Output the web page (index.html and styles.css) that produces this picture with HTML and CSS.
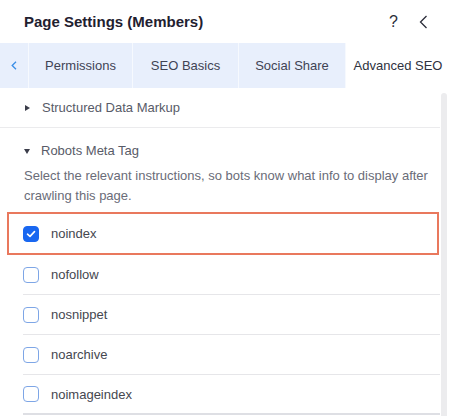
FILE: index.html
```html
<!DOCTYPE html>
<html>
<head>
<meta charset="utf-8">
<link rel="stylesheet" href="styles.css">
</head>
<body>
<div class="panel">
  <div class="header">
    <div class="title">Page Settings (Members)</div>
    <div class="actions">
      <span class="help">?</span>
      <svg class="back" width="9" height="14" viewBox="0 0 9 14"><path d="M7.5 1 L1.5 7 L7.5 13" fill="none" stroke="#2b2d3a" stroke-width="1.3"/></svg>
    </div>
  </div>
  <div class="tabs">
    <div class="tab arrow"><svg width="6" height="9" viewBox="0 0 6 9"><path d="M5 0.8 L1.2 4.5 L5 8.2" fill="none" stroke="#3a8ee6" stroke-width="1.3"/></svg></div>
    <div class="tab t1">Permissions</div>
    <div class="tab t2">SEO Basics</div>
    <div class="tab t3">Social Share</div>
    <div class="tab active">Advanced SEO</div>
  </div>
  <div class="body">
    <div class="main">
      <div class="section collapsed">
        <span class="tri tri-right"></span>
        <span class="sec-title">Structured Data Markup</span>
      </div>
      <div class="section-open">
        <div class="sec-head">
          <span class="tri tri-down"></span>
          <span class="sec-title">Robots Meta Tag</span>
        </div>
        <p class="desc">Select the relevant instructions, so bots know what info to display after crawling this page.</p>
        <div class="highlight">
          <div class="opt">
            <span class="cb checked"><svg width="10" height="8" viewBox="0 0 10 8"><path d="M1.5 4.2 L4 6.4 L8.5 1.6" fill="none" stroke="#fff" stroke-width="1.6" stroke-linecap="round" stroke-linejoin="round"/></svg></span>
            <span class="lbl">noindex</span>
          </div>
        </div>
        <div class="list">
          <div class="opt row"><span class="cb"></span><span class="lbl">nofollow</span></div>
          <div class="opt row"><span class="cb"></span><span class="lbl">nosnippet</span></div>
          <div class="opt row"><span class="cb"></span><span class="lbl">noarchive</span></div>
          <div class="opt row last"><span class="cb"></span><span class="lbl">noimageindex</span></div>
        </div>
      </div>
    </div>
    <div class="scroll"><div class="thumb"></div></div>
  </div>
</div>
</body>
</html>
```
FILE: styles.css
```css
* { box-sizing: border-box; }
html, body { margin: 0; padding: 0; background: #fff; }
body { font-family: "Liberation Sans", Arial, sans-serif; width: 450px; height: 416px; overflow: hidden; }
.panel { width: 450px; }
.header { height: 43px; display: flex; align-items: center; justify-content: space-between; padding: 0 22px 0 24px; }
.title { font-size: 15px; font-weight: bold; color: #1f2130; }
.actions { display: flex; align-items: center; gap: 21px; }
.help { font-size: 16px; color: #2b2d3a; }
.back { display: block; }
.tabs { height: 45px; display: flex; background: #e8effc; }
.tab { display: flex; align-items: center; justify-content: center; font-size: 13px; color: #3f4354; border-right: 1px solid #f6f9fe; }
.arrow { width: 29px; }
.t1 { width: 104px; }
.t2 { width: 106px; }
.t3 { width: 107px; }
.active { flex: 1; background: #fff; border-right: none; color: #2f3240; }
.body { display: flex; }
.main { width: 440px; }
.scroll { width: 10px; padding: 5px 3px 0 1px; }
.thumb { width: 6px; height: 340px; background: #ececee; border-radius: 3px 3px 0 0; }
.section { height: 40px; display: flex; align-items: center; padding-left: 24px; border-bottom: 1px solid #ebebed; }
.tri { display: inline-block; width: 0; height: 0; }
.tri-right { border-top: 3px solid transparent; border-bottom: 3px solid transparent; border-left: 5px solid #3b3d4a; margin-left: 1px; margin-right: 12px; }
.tri-down { border-left: 3.5px solid transparent; border-right: 3.5px solid transparent; border-top: 5px solid #3b3d4a; margin-right: 11px; }
.sec-title { font-size: 13px; color: #585b68; }
.sec-head { display: flex; align-items: center; padding: 14px 0 0 24px; height: 32px; line-height: 18px; }
.desc { margin: 6px 6px 0 24px; font-size: 13px; line-height: 20px; color: #6a6c78; }
.highlight { margin: 6px 1px 0 7px; height: 43px; border: 2px solid #e9785d; display: flex; align-items: center; padding-left: 14px; }
.opt { display: flex; align-items: center; }
.cb { width: 16px; height: 16px; border: 1px solid #7ea6e6; border-radius: 4px; margin-right: 12px; display: flex; align-items: center; justify-content: center; }
.cb.checked { background: #1967f0; border-color: #1967f0; }
.lbl { font-size: 13px; color: #45474f; }
.list { margin-left: 23px; }
.row { height: 40px; border-bottom: 1px solid #e6e6e9; }
.row.last { border-bottom: 2px solid #dedfe4; }
```
